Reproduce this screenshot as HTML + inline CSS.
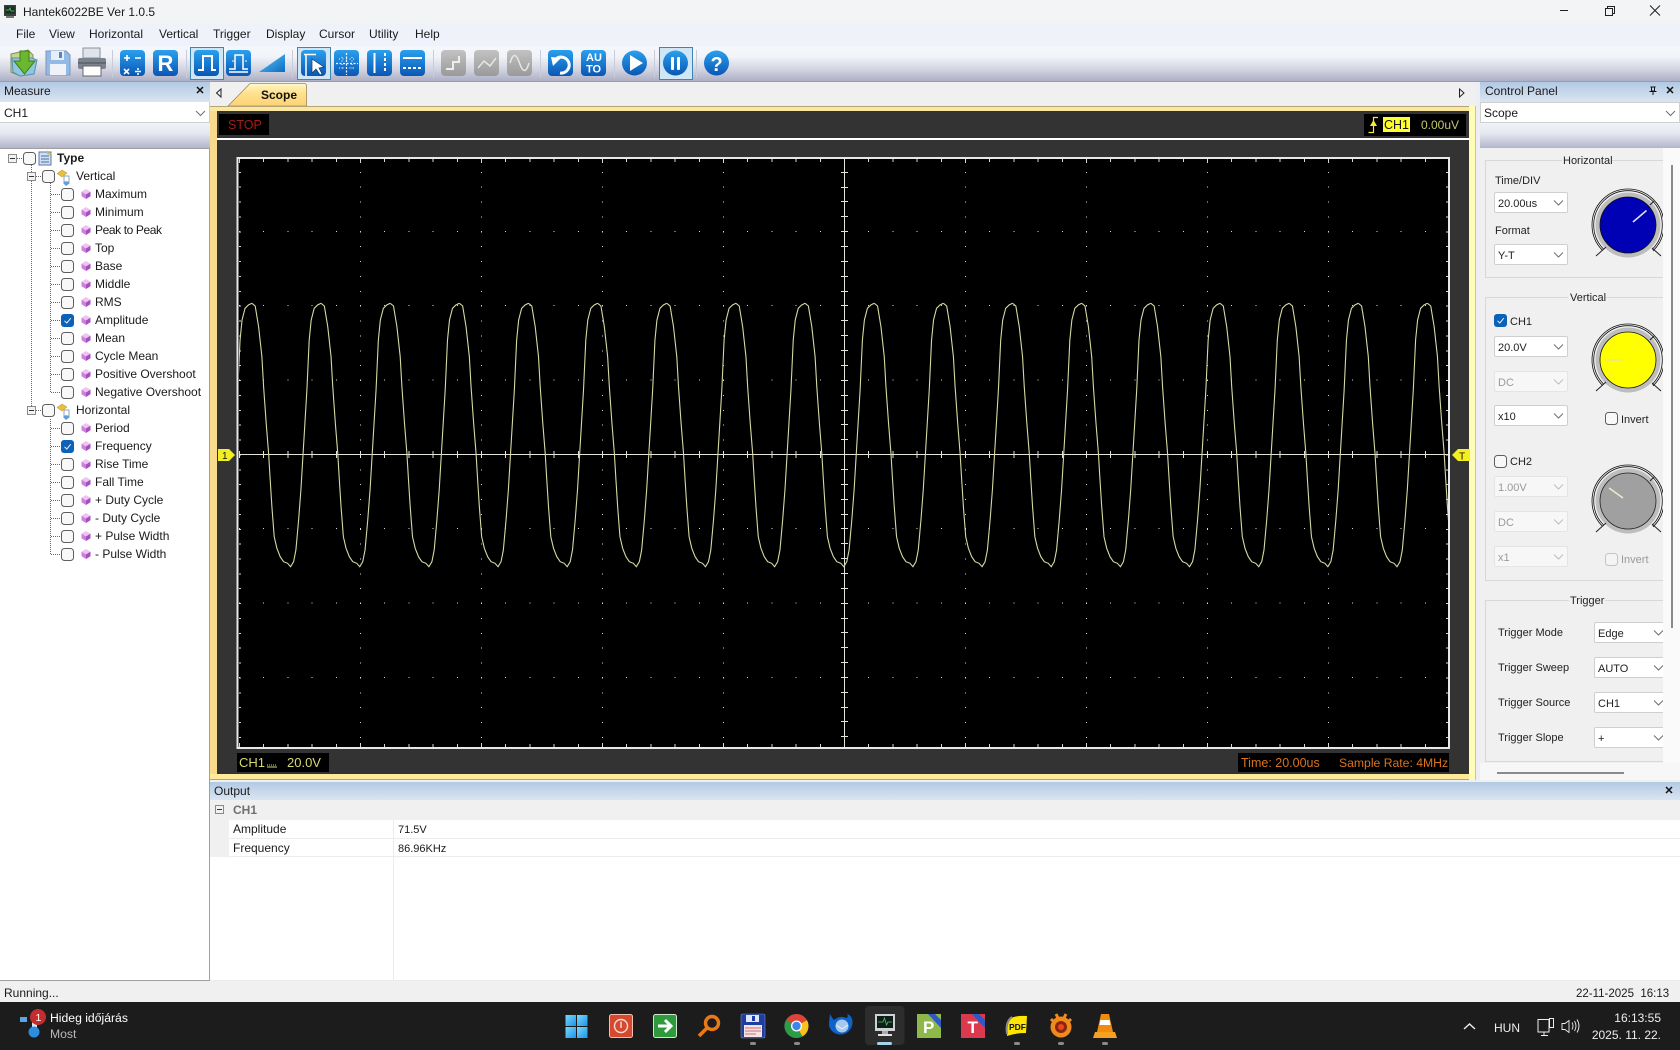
<!DOCTYPE html>
<html><head><meta charset="utf-8"><title>Hantek6022BE Ver 1.0.5</title>
<style>
html,body{margin:0;padding:0;background:#f0f0f0;overflow:hidden}
svg{display:block}
text{font-family:"Liberation Sans",sans-serif;font-size:12px;fill:#1a1a1a;white-space:pre}
.cp text{font-size:11px;fill:#222}
.cp text.dis{fill:#9a9a9a}
.dis{fill:#9a9a9a}
.v{font-size:11px}
</style></head><body>
<svg xmlns="http://www.w3.org/2000/svg" width="1680" height="1050" viewBox="0 0 1680 1050">
<defs>
<linearGradient id="tool" x1="0" y1="0" x2="0" y2="1"><stop offset="0" stop-color="#f4f7fc"/><stop offset=".3" stop-color="#f2f4fa"/><stop offset=".7" stop-color="#cfd1df"/><stop offset="1" stop-color="#adafc5"/></linearGradient>
<linearGradient id="sub" x1="0" y1="0" x2="0" y2="1"><stop offset="0" stop-color="#f1f3f9"/><stop offset=".4" stop-color="#e6e8f1"/><stop offset="1" stop-color="#b3b6cb"/></linearGradient>
<linearGradient id="hdr" x1="0" y1="0" x2="0" y2="1"><stop offset="0" stop-color="#b2c9e4"/><stop offset="1" stop-color="#dae5f1"/></linearGradient>
<linearGradient id="tab" x1="0" y1="0" x2="0" y2="1"><stop offset="0" stop-color="#fff8c8"/><stop offset=".45" stop-color="#ffe08c"/><stop offset="1" stop-color="#fdd476"/></linearGradient>
<linearGradient id="blue" x1="0" y1="0" x2="0" y2="1"><stop offset="0" stop-color="#2aa0ee"/><stop offset="1" stop-color="#0a56b4"/></linearGradient>
<linearGradient id="tri" x1="0" y1="0" x2="1" y2="1"><stop offset="0" stop-color="#62c8f2"/><stop offset="1" stop-color="#0a6cc4"/></linearGradient>
<linearGradient id="grey" x1="0" y1="0" x2="0" y2="1"><stop offset="0" stop-color="#c2c2c2"/><stop offset="1" stop-color="#9a9a9a"/></linearGradient>
<linearGradient id="win" x1="0" y1="0" x2="1" y2="1"><stop offset="0" stop-color="#7ad8fb"/><stop offset="1" stop-color="#1a94e8"/></linearGradient>
<clipPath id="plot"><rect x="239" y="159" width="1209" height="588"/></clipPath>
<clipPath id="cpclip"><rect x="1480" y="148" width="183" height="640"/></clipPath>
<rect id="btn" width="25" height="26" rx="4" fill="url(#blue)"/>
<rect id="gbtn" width="25" height="26" rx="4" fill="url(#grey)"/>
<circle id="cbtn" cx="12.5" cy="13" r="12.5" fill="url(#blue)"/>
<g id="chk"><rect x=".5" y=".5" width="12" height="12" rx="3" fill="#f8f8f8" stroke="#5e5e5e"/></g>
<g id="chkd"><rect width="13" height="13" rx="3" fill="#0c61b8"/><path d="M3.5 6.8L5.8 9 9.8 4.2" fill="none" stroke="#e6f1fb" stroke-width="1"/></g>
<g id="dia"><polygon points="5,0 9.5,2.6 5,5.4 .5,2.6" fill="#f0c4f0"/><polygon points=".5,2.6 5,5.4 5,10 .5,7.2" fill="#cc80dc"/><polygon points="9.5,2.6 5,5.4 5,10 9.5,7.2" fill="#a650c0"/></g>
<g id="ex"><rect x=".5" y=".5" width="8" height="8" fill="#f2f2f2" stroke="#8a8a8a"/><path d="M2 4.5H7" stroke="#333"/></g>
<g id="fold"><polygon points="6,0 11,3 6,7 1,3.5" fill="#e8bf3e" stroke="#b58c1e" stroke-width=".5"/><rect x="8" y="6" width="5" height="6" fill="#fff" stroke="#6b8fb8" stroke-width=".8"/><polygon points="10,11 14,13 10,16 7,13" fill="#5f9ed8"/></g>
<path id="chev" d="M0 0L4.5 4.5 9 0" fill="none" stroke="#6f6f6f" stroke-width="1"/>
<path id="chevd" d="M0 0L4.5 4.5 9 0" fill="none" stroke="#bdbdbd" stroke-width="1"/>
<g id="cb"><rect x=".5" y=".5" width="73" height="20" rx="1.5" fill="#fff" stroke="#cfcfcf"/><use href="#chev" x="60" y="8.5"/></g>
<g id="cbd"><rect x=".5" y=".5" width="73" height="20" rx="1.5" fill="#f7f7f7" stroke="#e4e4e4"/><use href="#chevd" x="60" y="8.5"/></g>
<g id="knob" fill="none">
<circle r="36" stroke="#111" stroke-width=".8" stroke-dasharray="170 56.2" transform="rotate(135)"/>
<circle r="34.3" stroke="#111" stroke-width=".8" stroke-dasharray="161.6 53.9" transform="rotate(135)"/>
<circle r="32.5" fill="#bdbdbd" stroke="none"/>
<path d="M-32 31L-22 22M33 31L24 23M22 -20L26 -24" stroke="#222" stroke-width="1"/>
</g>
<path id="wave" fill="none" stroke="#d8d9a2" stroke-width="1.1" d="M0 303.3L3.3 306 6.7 326.7 10 356.7 11.7 386.7 14.3 423.3 16.7 453.3 18.3 480 20 506.7 22.3 536.7 25 548.3 28.3 556.7 31.7 561.7 35.7 563.3 38.7 566.7 41.7 561.7 44 550 46.7 520 49 490 51 456.7 53 423.3 55 390 57.3 340 59.3 320 62.3 308.3 65.7 305 69.15 303.3"/>
</defs>

<!-- base -->
<rect width="1680" height="1050" fill="#f0f0f0"/>
<rect width="1680" height="23" fill="#f3f4f6"/>
<rect y="23" width="1680" height="23" fill="#eff2fb"/>
<rect y="46" width="1680" height="35" fill="url(#tool)"/>
<rect y="81" width="1680" height="1" fill="#9a9cad"/>

<!-- title bar -->
<g><rect x="4" y="5" width="12" height="11" fill="#3d3d3d"/><rect x="5.5" y="6.5" width="9" height="7" fill="#14321e"/><path d="M6 10h3l1-2 1 3h3" stroke="#6cd080" fill="none" stroke-width=".7"/><rect x="6" y="16" width="8" height="2" fill="#777"/></g>
<text x="23" y="16">Hantek6022BE Ver 1.0.5</text>
<path d="M1560 10.5H1568" stroke="#222" stroke-width="1"/>
<path d="M1605.5 8.5h7v7h-7zM1607.5 8.5v-2h7v7h-2" fill="none" stroke="#222" stroke-width="1"/>
<path d="M1650 5.5L1660 15.5M1660 5.5L1650 15.5" stroke="#222" stroke-width="1"/>

<!-- menu -->
<text x="16" y="38">File</text><text x="49" y="38">View</text><text x="89" y="38">Horizontal</text><text x="159" y="38">Vertical</text><text x="213" y="38">Trigger</text><text x="266" y="38">Display</text><text x="319" y="38">Cursor</text><text x="369" y="38">Utility</text><text x="415" y="38">Help</text>

<!-- toolbar separators -->
<g stroke="#c9cbd8"><path d="M112.5 50V78M186.5 50V78M292.5 50V78M433.5 50V78M540.5 50V78M614.5 50V78M654.5 50V78M696.5 50V78"/></g>
<!-- active boxes -->
<rect x="190.5" y="47.5" width="33" height="32" fill="#cfe6f6" stroke="#3f85b0"/>
<rect x="297.5" y="47.5" width="33" height="32" fill="#cfe6f6" stroke="#3f85b0"/>
<rect x="659.5" y="47.5" width="33" height="32" fill="#cfe6f6" stroke="#3f85b0"/>

<!-- open -->
<g><path d="M11 54L28 50 33 55V74L20 76 11 72Z" fill="#c9d38c" stroke="#7f8f5a"/><path d="M12 58H32L37 60 34 74 20 76 13 72Z" fill="#8fc6e0" stroke="#5b8fb0"/><path d="M20 51H29V61H35L24.5 74 14 61H20Z" fill="#6bb82e" stroke="#3f7f1a"/></g>
<!-- save -->
<g><path d="M46 51H66L70 55V75H46Z" fill="#93b9e6" stroke="#7d97bc"/><rect x="51" y="51" width="13" height="9" fill="#e6eef8"/><rect x="59" y="52" width="3" height="6" fill="#5a83b8"/><rect x="50" y="64" width="16" height="11" fill="#eef3fa"/></g>
<!-- print -->
<g><rect x="83" y="48" width="17" height="10" fill="#dfe3ea" stroke="#8a8f9a"/><rect x="78" y="58" width="28" height="11" rx="2" fill="#7c838f"/><rect x="83" y="66" width="18" height="10" fill="#fff" stroke="#666"/><path d="M78 63H106" stroke="#4a4f58"/></g>

<!-- calc -->
<use href="#btn" x="120" y="50"/>
<path d="M124 58h6M127 55v6M135 58h6M124 69l5 5M129 69l-5 5M135 71.500h6" stroke="#fff" stroke-width="1.600" fill="none"/><circle cx="138" cy="69" r="1" fill="#fff"/><circle cx="138" cy="74" r="1" fill="#fff"/>
<!-- R -->
<use href="#btn" x="153" y="50"/>
<text x="157.500" y="71" style="font-size:22px;fill:#fff;font-weight:bold">R</text>
<!-- pulse -->
<use href="#btn" x="194" y="50"/>
<path d="M198 70H203V56H212V70H216" fill="none" stroke="#fff" stroke-width="2"/>
<use href="#btn" x="226" y="50"/>
<path d="M229 69H235V55H243V69H248M229 72H248" fill="none" stroke="#fff" stroke-width="1.500"/><path d="M232 61h2M245 61h2" stroke="#dff" />
<!-- triangle -->
<polygon points="259,72 285,54 285,72" fill="url(#tri)"/>
<!-- cursor -->
<use href="#btn" x="301" y="50"/>
<path d="M304 54.500H316M306 54V76" stroke="#fff" stroke-width="1.500"/><path d="M312 59L312 73 316 69 320 75 322 74 319 68 324 67Z" fill="#fff" stroke="#113a6b" stroke-width=".7"/>
<!-- grid -->
<use href="#btn" x="334" y="50"/>
<path d="M346.500 53V75M336 63.500H358" stroke="#fff" stroke-dasharray="2 1.500" stroke-width="1.200"/><path d="M342 57V71M352 57V71M339 59H355M339 68H355" stroke="#fff" stroke-dasharray="1 2.500" stroke-width="1"/>
<!-- v cursors -->
<use href="#btn" x="367" y="50"/>
<path d="M374.500 53V73" stroke="#fff" stroke-width="2"/><path d="M385 53V73" stroke="#fff" stroke-width="2" stroke-dasharray="3 2"/>
<!-- h cursors -->
<use href="#btn" x="400" y="50"/>
<path d="M403 58H422" stroke="#fff" stroke-width="2"/><path d="M403 68H422" stroke="#fff" stroke-width="2" stroke-dasharray="3 2"/>
<!-- grey -->
<use href="#gbtn" x="441" y="50"/><path d="M446 69H453V62H459V56" fill="none" stroke="#eee" stroke-width="2"/>
<use href="#gbtn" x="474" y="50"/><path d="M478 68L484 61 490 66 496 58" fill="none" stroke="#e6e6e6" stroke-width="1.500"/>
<use href="#gbtn" x="507" y="50"/><path d="M510 63C513 53 516 53 519.500 63S526 73 529 63" fill="none" stroke="#e6e6e6" stroke-width="1.500"/>
<!-- undo -->
<use href="#btn" x="548" y="50"/>
<path d="M555 60A8 8 0 1 1 560 73" fill="none" stroke="#fff" stroke-width="3"/><polygon points="551,57 561,58 553,66" fill="#fff"/>
<!-- auto -->
<use href="#btn" x="581" y="50"/>
<text x="586" y="61" style="font-size:11px;font-weight:bold;fill:#fff">AU</text><text x="586" y="72.500" style="font-size:11px;font-weight:bold;fill:#fff">TO</text>
<!-- play -->
<use href="#cbtn" x="622" y="50"/><polygon points="630,55 630,71 643,63" fill="#fff"/>
<!-- pause -->
<use href="#cbtn" x="663" y="50"/><rect x="671" y="57" width="3" height="13" rx="1" fill="#fff"/><rect x="677" y="57" width="3" height="13" rx="1" fill="#fff"/>
<!-- help -->
<use href="#cbtn" x="704" y="50"/><text x="710.500" y="71" style="font-size:20px;font-weight:bold;fill:#fff">?</text>

<!-- left panel -->
<rect x="0" y="82" width="210" height="20" fill="url(#hdr)"/>
<text x="4" y="95">Measure</text>
<path d="M197 87L203 93M203 87L197 93" stroke="#111" stroke-width="1.500"/>
<rect x="0" y="102" width="210" height="21" fill="#fff"/>
<path d="M0 122.500H210M209.500 102V123" stroke="#d0d0d0"/>
<text x="4" y="117">CH1</text>
<use href="#chev" x="196" y="111"/>
<rect x="0" y="123" width="210" height="25" fill="url(#sub)"/>
<rect x="0" y="148" width="209" height="832" fill="#fff"/>
<path d="M0 148.500H209.500V980.500H0" fill="none" stroke="#a0a0a0"/>

<!-- tree lines -->
<g stroke="#666" stroke-dasharray="1 1" fill="none">
<path d="M31.500 165V410M50.500 183V392M50.500 419V554"/>
<path d="M17 158.500H23M36 176.500H42M36 410.500H42"/>
<path d="M51 194.500H61M51 212.500H61M51 230.500H61M51 248.500H61M51 266.500H61M51 284.500H61M51 302.500H61M51 320.500H61M51 338.500H61M51 356.500H61M51 374.500H61M51 392.500H61M51 428.500H61M51 446.500H61M51 464.500H61M51 482.500H61M51 500.500H61M51 518.500H61M51 536.500H61M51 554.500H61"/>
</g>
<!-- tree -->
<use href="#ex" x="8" y="154"/><use href="#chk" x="23" y="152"/>
<g><rect x="39" y="152" width="12" height="13" fill="#cfe0f3" stroke="#5878a8"/><path d="M41 156h8M41 159h8M41 162h8" stroke="#4d6e9f"/><polygon points="47,150 49,153 52,153 50,155 47,154" fill="#e8b83e"/></g>
<text x="57" y="162" style="font-weight:bold">Type</text>
<use href="#ex" x="27" y="172"/><use href="#chk" x="42" y="170"/><use href="#fold" x="56" y="170"/>
<text x="76" y="180">Vertical</text>
<use href="#ex" x="27" y="406"/><use href="#chk" x="42" y="404"/><use href="#fold" x="56" y="404"/>
<text x="76" y="414">Horizontal</text>

<g>
<use href="#chk" x="61" y="188"/><use href="#dia" x="81" y="189"/><text x="95" y="198">Maximum</text>
<use href="#chk" x="61" y="206"/><use href="#dia" x="81" y="207"/><text x="95" y="216">Minimum</text>
<use href="#chk" x="61" y="224"/><use href="#dia" x="81" y="225"/><text x="95" y="234" textLength="67">Peak to Peak</text>
<use href="#chk" x="61" y="242"/><use href="#dia" x="81" y="243"/><text x="95" y="252">Top</text>
<use href="#chk" x="61" y="260"/><use href="#dia" x="81" y="261"/><text x="95" y="270">Base</text>
<use href="#chk" x="61" y="278"/><use href="#dia" x="81" y="279"/><text x="95" y="288">Middle</text>
<use href="#chk" x="61" y="296"/><use href="#dia" x="81" y="297"/><text x="95" y="306">RMS</text>
<use href="#chkd" x="61" y="314"/><use href="#dia" x="81" y="315"/><text x="95" y="324">Amplitude</text>
<use href="#chk" x="61" y="332"/><use href="#dia" x="81" y="333"/><text x="95" y="342">Mean</text>
<use href="#chk" x="61" y="350"/><use href="#dia" x="81" y="351"/><text x="95" y="360">Cycle Mean</text>
<use href="#chk" x="61" y="368"/><use href="#dia" x="81" y="369"/><text x="95" y="378">Positive Overshoot</text>
<use href="#chk" x="61" y="386"/><use href="#dia" x="81" y="387"/><text x="95" y="396">Negative Overshoot</text>
<use href="#chk" x="61" y="422"/><use href="#dia" x="81" y="423"/><text x="95" y="432">Period</text>
<use href="#chkd" x="61" y="440"/><use href="#dia" x="81" y="441"/><text x="95" y="450">Frequency</text>
<use href="#chk" x="61" y="458"/><use href="#dia" x="81" y="459"/><text x="95" y="468">Rise Time</text>
<use href="#chk" x="61" y="476"/><use href="#dia" x="81" y="477"/><text x="95" y="486">Fall Time</text>
<use href="#chk" x="61" y="494"/><use href="#dia" x="81" y="495"/><text x="95" y="504">+ Duty Cycle</text>
<use href="#chk" x="61" y="512"/><use href="#dia" x="81" y="513"/><text x="95" y="522">- Duty Cycle</text>
<use href="#chk" x="61" y="530"/><use href="#dia" x="81" y="531"/><text x="95" y="540">+ Pulse Width</text>
<use href="#chk" x="61" y="548"/><use href="#dia" x="81" y="549"/><text x="95" y="558">- Pulse Width</text>
</g>

<!-- tab strip -->
<rect x="210" y="82" width="1266" height="24" fill="#f0f0f0"/>
<path d="M221 89V97L216.500 93Z" fill="none" stroke="#222"/>
<path d="M1459.500 89V97L1464 93Z" fill="none" stroke="#222"/>
<path d="M228 106L250 83.500H304Q306.500 83.500 306.500 86V106Z" fill="url(#tab)" stroke="#9d8a55" stroke-width=".8"/>
<text x="261" y="99" style="font-weight:bold;fill:#111">Scope</text>
<!-- frame -->
<rect x="210" y="106" width="1266" height="674" fill="#fff3a8"/>
<rect x="210" y="106" width="7" height="674" fill="#f8da8e"/>
<rect x="210" y="106" width="1266" height="5" fill="#fbe7a0"/>
<rect x="210" y="106" width="1266" height="1" fill="#b5a476"/>
<rect x="210" y="774" width="1266" height="6" fill="#fde998"/>
<rect x="210" y="779" width="1266" height="1" fill="#b5a476"/>
<rect x="1469" y="106" width="7" height="674" fill="#fffcb8"/>
<rect x="1475.500" y="106" width="1" height="674" fill="#8f8f70"/>
<rect x="217" y="111" width="1252" height="663" fill="#333"/>
<!-- status -->
<rect x="219" y="114" width="50" height="21" fill="#000"/>
<text x="228" y="129" style="font-size:12.500px;fill:#a81c14">STOP</text>
<rect x="1364" y="114" width="102" height="22" fill="#000"/>
<path d="M1368.500 132.500H1373.500V117.500H1378" fill="none" stroke="#f4ee30" stroke-width="1.200"/><polygon points="1373.500,120 1370,126 1377,126" fill="#f4ee30"/>
<rect x="1383" y="117" width="27" height="15" fill="#ffff2e"/>
<text x="1384" y="129" style="font-size:12.500px;fill:#111">CH1</text>
<text x="1421" y="129" style="fill:#c6c66e;font-size:12px">0.00uV</text>
<rect x="217" y="138" width="1252" height="2" fill="#fff"/>

<!-- plot -->
<rect x="237.500" y="158" width="1211.500" height="590" fill="#000" stroke="#e8e8e8" stroke-width="2"/>
<g clip-path="url(#plot)" shape-rendering="crispEdges" fill="none" stroke="#d8d8d8">
<g stroke-dasharray="1 13.870" stroke-width="1">
<path d="M360.500 157V748M481.500 157V748M602.500 157V748M723.500 157V748M965.500 157V748M1086.500 157V748M1207.500 157V748M1328.500 157V748"/>
</g>
<g stroke-dasharray="1 23.200" stroke-width="1">
<path d="M239 231.500H1449M239 305.500H1449M239 380H1449M239 528.500H1449M239 603H1449M239 677.500H1449"/>
</g>
<path d="M239 160.500H1449M239 745.500H1449" stroke-width="3" stroke-dasharray="1 23.200"/>
<path d="M240 157V748M1447 157V748" stroke-width="2" stroke-dasharray="1 13.870"/>
<path d="M239 161H1449M239 745H1449" stroke-width="4" stroke-dasharray="1 120"/>
<path d="M239 454.500H1449M844.500 157V748" stroke="#e4e4d8" stroke-width="1"/>
<path d="M239 454.500H1449" stroke="#e4e4d8" stroke-width="7" stroke-dasharray="1 23.200"/>
<path stroke="#e4e4d8" d="M841 172.500h7M841 187.500h7M841 201.500h7M841 216.500h7M841 231.500h7M841 246.500h7M841 261.500h7M841 276.500h7M841 291.500h7M841 305.500h7M841 320.500h7M841 335.500h7M841 350.500h7M841 365.500h7M841 380.500h7M841 395.500h7M841 410.500h7M841 424.500h7M841 439.500h7M841 469.500h7M841 484.500h7M841 499.500h7M841 514.500h7M841 528.500h7M841 543.500h7M841 558.500h7M841 573.500h7M841 588.500h7M841 603.500h7M841 618.500h7M841 632.500h7M841 647.500h7M841 662.500h7M841 677.500h7M841 692.500h7M841 707.500h7M841 721.500h7M841 736.500h7"/>
</g>
<g clip-path="url(#plot)">
<use href="#wave" x="182.750"/><use href="#wave" x="251.900"/><use href="#wave" x="321.050"/><use href="#wave" x="390.200"/><use href="#wave" x="459.350"/><use href="#wave" x="528.500"/><use href="#wave" x="597.650"/><use href="#wave" x="666.800"/><use href="#wave" x="735.950"/><use href="#wave" x="805.100"/><use href="#wave" x="874.250"/><use href="#wave" x="943.400"/><use href="#wave" x="1012.550"/><use href="#wave" x="1081.700"/><use href="#wave" x="1150.850"/><use href="#wave" x="1220"/><use href="#wave" x="1289.150"/><use href="#wave" x="1358.300"/><use href="#wave" x="1427.450"/>
</g>
<!-- markers -->
<polygon points="218,449 229,449 235,455 229,461 218,461" fill="#f2ee24"/>
<text x="222" y="459" style="font-size:10px;fill:#111">1</text>
<polygon points="1452,455 1458,449 1470,449 1470,461 1458,461" fill="#f4f020"/>
<text x="1459" y="459.500" style="font-size:10px;fill:#111">T</text>
<!-- bottom labels -->
<rect x="237" y="753" width="92" height="19" fill="#000"/>
<text x="239" y="767" style="font-size:13px;fill:#d8d873">CH1</text>
<path d="M267 767H277" stroke="#d8d873"/><path d="M267 765H277" stroke="#d8d873" stroke-dasharray="1 1"/>
<text x="287" y="767" style="font-size:13px;fill:#d8d873">20.0V</text>
<rect x="1238" y="753" width="211" height="19" fill="#000"/>
<text x="1241" y="767" style="font-size:12.500px;fill:#d9731f">Time: 20.00us</text>
<text x="1339" y="767" style="font-size:12.200px;fill:#d9731f">Sample Rate: 4MHz</text>

<!-- output -->
<rect x="210" y="782" width="1470" height="18" fill="url(#hdr)"/>
<text x="214" y="795">Output</text>
<path d="M1666 787L1672 793M1672 787L1666 793" stroke="#111" stroke-width="1.500"/>
<rect x="210" y="800" width="1470" height="180" fill="#fff"/>
<rect x="210" y="800" width="1470" height="20" fill="#f0f0f0"/>
<rect x="210" y="820" width="19" height="37" fill="#f0f0f0"/>
<path d="M229 838.500H1680M229 856.500H1680M393.500 820V980M210 980.500H1680" stroke="#ececec"/>
<use href="#ex" x="215" y="805"/>
<text x="233" y="814" style="font-weight:bold;fill:#6f6f6f">CH1</text>
<text x="233" y="833">Amplitude</text><text x="398" y="833" class="v">71.5V</text>
<text x="233" y="852">Frequency</text><text x="398" y="852" class="v">86.96KHz</text>

<!-- status bar -->
<rect y="981" width="1680" height="21" fill="#f0f0f0"/>
<text x="4" y="997">Running...</text>
<text x="1576" y="997" style="font-size:11.500px">22-11-2025  16:13</text>

<!-- control panel -->
<rect x="1480" y="82" width="200" height="20" fill="url(#hdr)"/>
<text x="1485" y="95">Control Panel</text>
<path d="M1650.500 87h5M1651.500 87v4h3v-4M1649.500 91.500h7M1653 92v3" fill="none" stroke="#111"/>
<path d="M1667 87L1673 93M1673 87L1667 93" stroke="#111" stroke-width="1.500"/>
<rect x="1480.500" y="102.500" width="199" height="20" fill="#fff" stroke="#d0d0d0"/>
<text x="1484" y="117">Scope</text>
<use href="#chev" x="1666" y="111"/>
<rect x="1480" y="123" width="200" height="25" fill="url(#sub)"/>
<rect x="1480" y="148" width="183" height="615" fill="#f0f0f0"/>
<rect x="1663" y="148" width="17" height="632" fill="#fafafa"/>
<rect x="1480" y="763" width="200" height="17" fill="#f7f7f7"/>
<rect x="1671" y="165" width="2" height="463" fill="#8a8a8a"/>
<rect x="1497" y="772" width="127" height="2" fill="#8a8a8a"/>

<g clip-path="url(#cpclip)" class="cp">
<path d="M1562 160.500H1485.500V277.500H1680M1612 160.500H1680" fill="none" stroke="#d8d8d8"/>
<path d="M1568 297.500H1485.500V580.500H1680M1606 297.500H1680" fill="none" stroke="#d8d8d8"/>
<path d="M1569 600.500H1485.500V761.500H1680M1605 600.500H1680" fill="none" stroke="#d8d8d8"/>
<text x="1563" y="164">Horizontal</text>
<text x="1570" y="301">Vertical</text>
<text x="1570" y="604">Trigger</text>
<!-- horizontal -->
<text x="1495" y="184">Time/DIV</text>
<use href="#cb" x="1494" y="192"/><text x="1498" y="207">20.00us</text>
<text x="1495" y="234">Format</text>
<use href="#cb" x="1494" y="244"/><text x="1498" y="259">Y-T</text>
<g transform="translate(1628,225)"><use href="#knob"/><circle r="28" fill="#0000b4" stroke="#111" stroke-width=".8"/><path d="M5 -3L18.500 -14.500" stroke="#e4e4f0" stroke-width="1.500"/></g>
<!-- vertical -->
<use href="#chkd" x="1494" y="314"/><text x="1510" y="325">CH1</text>
<use href="#cb" x="1494" y="336"/><text x="1498" y="351">20.0V</text>
<use href="#cbd" x="1494" y="371"/><text x="1498" y="386" class="dis">DC</text>
<use href="#cb" x="1494" y="405"/><text x="1498" y="420">x10</text>
<use href="#chk" x="1605" y="412"/><text x="1621" y="423">Invert</text>
<g transform="translate(1628,360)"><use href="#knob"/><circle r="28" fill="#ffff00" stroke="#111" stroke-width=".8"/><path d="M-22 0H-6" stroke="#e8e888" stroke-width="1.500"/></g>
<use href="#chk" x="1494" y="455"/><text x="1510" y="465">CH2</text>
<use href="#cbd" x="1494" y="476"/><text x="1498" y="491" class="dis">1.00V</text>
<use href="#cbd" x="1494" y="511"/><text x="1498" y="526" class="dis">DC</text>
<use href="#cbd" x="1494" y="546"/><text x="1498" y="561" class="dis">x1</text>
<rect x="1605.500" y="553.500" width="12" height="12" rx="3" fill="#f4f4f4" stroke="#c4c4c4"/><text x="1621" y="563" class="dis">Invert</text>
<g transform="translate(1628,501)"><use href="#knob"/><circle r="28" fill="#a0a0a0" stroke="#222" stroke-width=".8"/><path d="M-19 -13L-5 -3" stroke="#ecebd0" stroke-width="1.500"/></g>
<!-- trigger -->
<text x="1498" y="636">Trigger Mode</text>
<text x="1498" y="671">Trigger Sweep</text>
<text x="1498" y="706">Trigger Source</text>
<text x="1498" y="741">Trigger Slope</text>
<use href="#cb" x="1594" y="622"/><text x="1598" y="637">Edge</text>
<use href="#cb" x="1594" y="657"/><text x="1598" y="672">AUTO</text>
<use href="#cb" x="1594" y="692"/><text x="1598" y="707">CH1</text>
<use href="#cb" x="1594" y="727"/><text x="1598" y="742">+</text>
</g>
<rect x="1476" y="82" width="4" height="698" fill="#eceef4"/>

<!-- taskbar -->
<rect y="1002" width="1680" height="48" fill="#1c1c1c"/>
<g>
<rect x="20" y="1017" width="7" height="5" fill="#5aa5e6"/>
<rect x="32" y="1018" width="5" height="16" rx="2.500" fill="#d6e8f6"/>
<circle cx="34" cy="1032" r="5.500" fill="#2b8fe0"/>
<circle cx="38" cy="1017" r="8" fill="#c52d2d"/>
<text x="35.500" y="1021" style="font-size:10.500px;fill:#fff">1</text>
<text x="50" y="1022" style="font-size:12.200px;fill:#fff">Hideg időjárás</text>
<text x="50" y="1038" style="font-size:12.200px;fill:#b9b9b9">Most</text>
</g>
<!-- start -->
<g fill="url(#win)"><rect x="565.500" y="1015" width="10.500" height="11"/><rect x="577" y="1015" width="10.500" height="11"/><rect x="565.500" y="1027" width="10.500" height="11"/><rect x="577" y="1027" width="10.500" height="11"/></g>
<!-- power -->
<rect x="609.500" y="1014.500" width="23" height="23" rx="2" fill="#d5492f" stroke="#eec0b0"/><circle cx="621" cy="1026" r="6.500" fill="none" stroke="#f8dcd4" stroke-width="1.400"/><path d="M621 1021.500V1028" stroke="#f8dcd4" stroke-width="1.400"/>
<!-- arrow -->
<rect x="653.500" y="1014.500" width="23" height="23" rx="2" fill="#2f9a3c" stroke="#cfe8cf"/><path d="M658 1026H670M665 1020L671 1026 665 1032" fill="none" stroke="#fff" stroke-width="3"/>
<!-- search -->
<circle cx="712" cy="1023" r="6.500" fill="none" stroke="#ea7a16" stroke-width="3.400"/><path d="M707 1028L699 1036" stroke="#ea7a16" stroke-width="3.600"/>
<!-- floppy -->
<rect x="741" y="1014" width="24" height="24" rx="1.500" fill="#1f3ea0" stroke="#6b86d4" stroke-width=".6"/><rect x="746" y="1015" width="13" height="7" fill="#dfe7f6"/><rect x="752" y="1016" width="3" height="5" fill="#1f3ea0"/><rect x="744" y="1025" width="18" height="12" fill="#f3e4e4"/><path d="M745 1028H761M745 1031H761M745 1034H756" stroke="#d66a7a"/>
<!-- chrome -->
<g><circle cx="796.500" cy="1026" r="12" fill="#dd4437"/><path d="M796.500 1026L786.100 1032A12 12 0 0 0 802.500 1036.400Z" fill="#2a9d4a"/><path d="M786.100 1032A12 12 0 0 1 786.100 1020L796.500 1026Z" fill="#2a9d4a"/><path d="M796.500 1026L807 1020.200A12 12 0 0 1 802.500 1036.400Z" fill="#f9c31e"/><circle cx="796.500" cy="1026" r="5.500" fill="#fff"/><circle cx="796.500" cy="1026" r="4.200" fill="#3f84ee"/></g>
<!-- thunderbird -->
<g><path d="M830 1014Q829 1020 829 1026A12 12 0 1 0 852 1019Q851 1015 847 1014Q849 1017 846 1018Q840 1015 834 1020Q832 1018 830 1014Z" fill="#0e62c8"/><circle cx="842" cy="1026" r="6.500" fill="#a6c8ee"/><path d="M836 1025L842 1029 848 1025" stroke="#e8f2fc" fill="none"/></g>
<!-- scope active -->
<rect x="865" y="1006" width="39.500" height="39" rx="4" fill="#2d2d2d"/>
<rect x="875" y="1014" width="20" height="17" fill="#cfd2d4"/><rect x="877" y="1016" width="16" height="12" fill="#0d1f17"/><path d="M878 1022h5l1.500-4 2 7 1.500-3h4" fill="none" stroke="#4fc070" stroke-width=".8"/><rect x="882" y="1031" width="6" height="3" fill="#aaa"/><rect x="878" y="1034" width="14" height="2" fill="#e2e2e2"/>
<rect x="877" y="1042" width="15" height="3" rx="1.500" fill="#a3d4e8"/>
<!-- P -->
<rect x="917" y="1014" width="24" height="24" fill="#8eb84a"/><polygon points="928,1014 935,1014 941,1020 941,1028" fill="#2f58c4"/><text x="923" y="1033" style="font-size:17px;font-weight:bold;fill:#fff">P</text>
<!-- T -->
<rect x="961" y="1014" width="24" height="24" fill="#db3a4e"/><polygon points="972,1014 979,1014 985,1020 985,1028" fill="#2f58c4"/><text x="967.500" y="1033" style="font-size:17px;font-weight:bold;fill:#fff">T</text>
<!-- pdf -->
<path d="M1008 1020Q1014 1015 1027 1016L1026 1033Q1015 1033 1007 1036Z" fill="#ffe600"/><path d="M1007 1034Q1005 1022 1012 1017" stroke="#888" fill="none" stroke-width="2"/><text x="1009" y="1030" style="font-size:8.500px;font-weight:bold;fill:#111">PDF</text>
<!-- xnview -->
<g><circle cx="1061" cy="1027" r="10.500" fill="#ef8a1c"/><path d="M1051 1019l3 3M1056 1014l2 4M1066 1014l-2 4M1071 1019l-3 3" stroke="#ef8a1c" stroke-width="3"/><circle cx="1061" cy="1027" r="6" fill="#8c2412"/><circle cx="1061" cy="1027" r="3" fill="#e64a1c"/></g>
<!-- vlc -->
<g><polygon points="1105,1014 1109,1014 1113,1032 1097,1032 1101,1014" fill="#f08a10"/><polygon points="1100.500,1020 1109.500,1020 1110.500,1025 1099.500,1025" fill="#fff"/><path d="M1095 1032H1115L1117 1038H1093Z" fill="#f4a020"/></g>
<!-- taskbar dots -->
<g fill="#8a8a8a"><rect x="750" y="1042" width="6" height="3" rx="1.500"/><rect x="794" y="1042" width="6" height="3" rx="1.500"/><rect x="1014" y="1042" width="6" height="3" rx="1.500"/><rect x="1058" y="1042" width="6" height="3" rx="1.500"/><rect x="1102" y="1042" width="6" height="3" rx="1.500"/></g>
<!-- tray -->
<path d="M1464 1029L1469.500 1024 1475 1029" fill="none" stroke="#eee" stroke-width="1.400"/>
<text x="1494" y="1032" style="font-size:12px;fill:#eee">HUN</text>
<path d="M1538 1019.500H1549V1032H1538ZM1541 1035.500H1548M1544 1032V1035" fill="none" stroke="#eee"/>
<rect x="1549.500" y="1018.500" width="4" height="9" fill="#1c1c1c" stroke="#eee"/>
<path d="M1562 1023.500h3l4-3v12l-4-3h-3zM1572 1022.500q2 3.500 0 7M1574.500 1021q3 5 0 10M1577 1019.500q4 6.500 0 13" fill="none" stroke="#eee" stroke-width=".9"/>
<text x="1661" y="1022" text-anchor="end" style="font-size:12px;fill:#eee">16:13:55</text>
<text x="1661" y="1039" text-anchor="end" style="font-size:12px;fill:#eee">2025. 11. 22.</text>
</svg>
</body></html>
